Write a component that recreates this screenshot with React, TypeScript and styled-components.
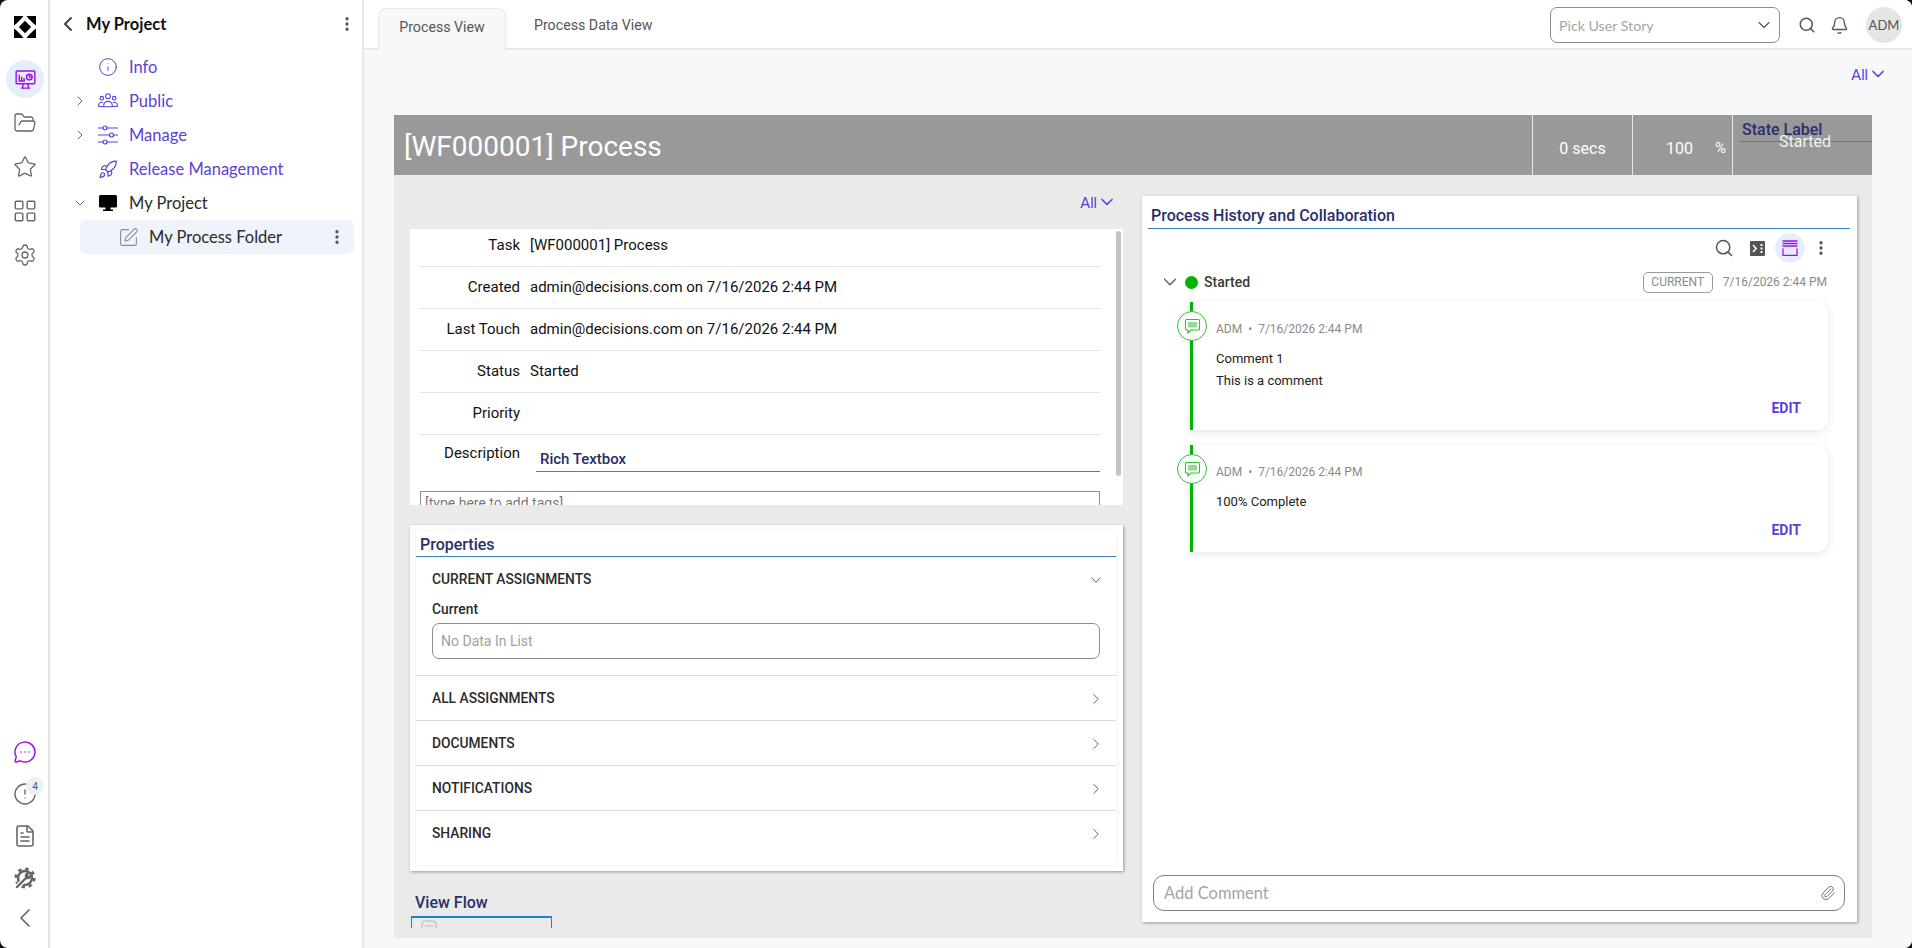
import React from 'react';
import styled, { createGlobalStyle } from 'styled-components';
import {
  ChevronDown,
  ChevronLeft,
  ChevronRight,
  Bell,
  EllipsisVertical,
  FileText,
  FolderOpen,
  Info,
  LayoutGrid,
  MessageCircleMore,
  Paperclip,
  Rocket,
  Search,
  Settings,
  SquarePen,
  Star,
  CircleAlert,
} from 'lucide-react';

const SIDE_FONT = '"Lato", "Noto Sans", sans-serif';
const BODY_FONT = 'Roboto, "Liberation Sans", sans-serif';
const PURPLE = '#5b3fd6';
const NAVY = '#27306b';
const BLUE_LINE = '#3b82c4';

const GlobalStyle = createGlobalStyle`
  html, body { margin: 0; padding: 0; background: #111; height: 100%; overflow: hidden; }
  * { box-sizing: border-box; }
  #root { height: 100%; }
`;

const Page = styled.div`
  display: flex;
  height: 948px;
  width: 1912px;
  background: #fff;
  border-radius: 8px;
  overflow: hidden;
  font-family: ${BODY_FONT};
`;

const Rail = styled.nav`
  width: 50px;
  flex: none;
  border-right: 2px solid #e4e4e4;
  display: flex;
  flex-direction: column;
  align-items: center;
  justify-content: space-between;
  padding: 5px 0 11px 2px;
`;

const RailGroup = styled.div`
  display: flex;
  flex-direction: column;
  align-items: center;
`;

const RailItem = styled.div<{ $active?: boolean; $h?: number; $color?: string; $gap?: number }>`
  position: relative;
  width: 44px;
  height: ${(p) => p.$h ?? 44}px;
  margin-top: ${(p) => p.$gap ?? 0}px;
  display: flex;
  align-items: center;
  justify-content: center;
  color: ${(p) => p.$color ?? '#666'};

  ${(p) =>
    p.$active &&
    `
    &::before {
      content: '';
      position: absolute;
      left: 3px;
      top: 3px;
      width: 38px;
      height: 38px;
      border-radius: 50%;
      background: #e6eefd;
    }
    svg { position: relative; }
  `}
`;

const RailBadge = styled.span`
  position: absolute;
  top: 4px;
  right: 3px;
  width: 18px;
  height: 18px;
  border-radius: 50%;
  background: #f0f0f0;
  color: #2f5f95;
  font-size: 10px;
  display: flex;
  align-items: center;
  justify-content: center;
`;

const Sidebar = styled.aside`
  width: 314px;
  flex: none;
  border-right: 2px solid #e8e8e8;
  font-family: ${SIDE_FONT};
  padding: 7px 8px 0 0;
`;

const SideHeader = styled.div`
  display: flex;
  align-items: center;
  height: 34px;
  padding-left: 6px;
  margin-bottom: 9px;
  color: #444;
`;

const SideTitle = styled.div`
  flex: 1;
  margin-left: 6px;
  font-size: 16.5px;
  font-weight: 700;
  color: #111;
`;

const TreeRow = styled.div<{ $selected?: boolean; $dark?: boolean }>`
  height: 34px;
  display: flex;
  align-items: center;
  font-size: 16.5px;
  color: ${(p) => (p.$dark ? '#2a2a2a' : PURPLE)};
  padding-left: ${(p) => (p.$selected ? 0 : '22px')};
  margin-left: ${(p) => (p.$selected ? '30px' : 0)};
  background: ${(p) => (p.$selected ? '#eef3fc' : 'transparent')};
  border-radius: 6px;
`;

const Caret = styled.span`
  width: 16px;
  display: flex;
  justify-content: center;
  color: #555;
  margin-right: 10px;
`;

const TreeIcon = styled.span`
  width: 20px;
  display: flex;
  justify-content: center;
  margin-right: 11px;
  color: ${PURPLE};
`;

const SelectedIcon = styled.span`
  display: flex;
  margin: 0 10px 0 38px;
  color: #8a8a8a;
`;

const TreeText = styled.span<{ $grow?: boolean }>`
  flex: ${(p) => (p.$grow ? 1 : 'none')};
`;

const KebabButton = styled.span<{ $right: number }>`
  display: flex;
  color: #555;
  margin-right: ${(p) => p.$right}px;
`;

const Main = styled.main`
  flex: 1;
  min-width: 0;
  background: #f7f8fa;
  display: flex;
  flex-direction: column;
`;

const TopBar = styled.header`
  height: 50px;
  flex: none;
  background: #fff;
  border-bottom: 2px solid #e8e8e8;
  display: flex;
  align-items: flex-end;
  padding-left: 14px;
`;

const ActiveTab = styled.div`
  width: 128px;
  height: 42px;
  margin-bottom: -2px;
  background: #f7f8fa;
  border: 1px solid #e8e8e8;
  border-bottom: none;
  border-radius: 8px 8px 0 0;
  display: flex;
  align-items: center;
  justify-content: center;
  font-size: 14.2px;
  color: #555;
  padding-bottom: 5px;
`;

const PlainTab = styled.div`
  height: 46px;
  margin-left: 28px;
  display: flex;
  align-items: center;
  font-size: 14.2px;
  color: #555;
`;

const TopTools = styled.div`
  margin-left: auto;
  height: 48px;
  align-self: flex-start;
  display: flex;
  align-items: center;
  padding: 2px 10px 0 0;
  color: #555;
`;

const StoryPicker = styled.div`
  width: 230px;
  height: 36px;
  border: 1px solid #8c8c8c;
  border-radius: 7px;
  display: flex;
  align-items: center;
  justify-content: space-between;
  padding: 0 5px 0 8px;
  font-family: ${SIDE_FONT};
  font-size: 14.2px;
  color: #a5a5a5;
  margin-right: 18px;

  svg { color: #555; }
`;

const BellWrap = styled.span`
  display: flex;
  margin: 0 17px 0 14px;
`;

const Avatar = styled.div`
  width: 36px;
  height: 36px;
  border-radius: 50%;
  background: #e5e5e5;
  display: flex;
  align-items: center;
  justify-content: center;
  font-family: ${SIDE_FONT};
  font-size: 13px;
  color: #555;
`;

const AllFilter = styled.div<{ $tight?: boolean }>`
  display: flex;
  justify-content: flex-end;
  align-items: center;
  color: ${PURPLE};
  font-family: ${SIDE_FONT};
  font-size: 14.5px;
  height: ${(p) => (p.$tight ? '54px' : '65px')};
  padding-right: ${(p) => (p.$tight ? '6px' : '24px')};
  padding-top: ${(p) => (p.$tight ? 0 : '1px')};
  padding-bottom: ${(p) => (p.$tight ? 0 : '18px')};
`;

const Panel = styled.section`
  margin-left: 30px;
  width: 1478px;
  flex: 1;
  min-height: 0;
  margin-bottom: 10px;
  display: flex;
  flex-direction: column;
`;

const ProcessHeader = styled.div`
  height: 60px;
  flex: none;
  background: #999;
  color: #fff;
  display: flex;
  align-items: stretch;
`;

const ProcessTitle = styled.div`
  flex: 1;
  padding: 2px 0 0 10px;
  display: flex;
  align-items: center;
  font-size: 28px;
`;

const HeaderCell = styled.div<{ $w: number; $between?: boolean }>`
  width: ${(p) => p.$w}px;
  border-left: 1px solid #e6e6e6;
  display: flex;
  align-items: center;
  justify-content: ${(p) => (p.$between ? 'flex-end' : 'center')};
  font-size: 16px;
  padding-top: 6px;
  padding-right: ${(p) => (p.$between ? '6px' : 0)};
`;

const Percent = styled.span`
  margin-left: 22px;
  font-size: 15px;
`;

const StateCell = styled.div`
  width: 140px;
  border-left: 1px solid #e6e6e6;
  position: relative;
`;

const StateLabel = styled.div`
  margin: 4px 0 0 9px;
  height: 22px;
  font-size: 16px;
  font-weight: 500;
  color: ${NAVY};
  line-height: 21px;
`;

const StateRule = styled.div`
  height: 1px;
  margin-left: 6px;
  background: ${BLUE_LINE};
`;

const StateValue = styled.div`
  position: absolute;
  left: 46px;
  top: 17px;
  font-size: 16px;
  color: #f2f2f2;
`;

const PanelBody = styled.div`
  flex: 1;
  min-height: 0;
  background: #eaeaea;
  display: flex;
  gap: 19px;
  padding-left: 16px;
  overflow: hidden;
`;

const LeftColumn = styled.div`
  width: 713px;
  flex: none;
  display: flex;
  flex-direction: column;
`;

const InfoCard = styled.div`
  height: 276px;
  flex: none;
  background: #fff;
  display: flex;
  overflow: hidden;
`;

const InfoContent = styled.div`
  flex: 1;
  padding: 0 0 0 10px;
  min-width: 0;
`;

const InfoRow = styled.div<{ $first?: boolean }>`
  display: flex;
  align-items: center;
  height: ${(p) => (p.$first ? '38px' : '42px')};
  border-bottom: 1px solid #e3e3e3;
  padding-bottom: ${(p) => (p.$first ? '6px' : '2px')};
  font-size: 15px;
  color: #111;
`;

const InfoLabel = styled.div`
  width: 100px;
  flex: none;
  text-align: right;
  margin-right: 10px;
`;

const DescriptionRow = styled.div`
  display: flex;
  height: 56px;
  padding-top: 9px;
  font-size: 15px;
  color: #111;
`;

const SectionTitle = styled.div`
  color: ${NAVY};
  font-weight: 500;
  font-size: 16px;
  border-bottom: 1px solid ${BLUE_LINE};
`;

const RichBox = styled(SectionTitle)`
  flex: 1;
  margin: -1px 0 0 6px;
  height: 29px;
  padding: 7px 0 0 4px;
  font-size: 15px;
`;

const TagInput = styled.div`
  height: 30px;
  border: 1px solid #8f8f8f;
  padding: 3px 4px;
  font-size: 14px;
  color: #777;
`;

const ScrollTrack = styled.div`
  width: 23px;
  flex: none;
  padding: 2px 0 0 16px;
`;

const ScrollThumb = styled.div`
  width: 5px;
  height: 245px;
  background: #c4c4c4;
  border-radius: 3px;
`;

const PropertiesCard = styled.div`
  height: 346px;
  flex: none;
  margin-top: 20px;
  background: #fff;
  box-shadow: 1px 1px 3px rgba(0, 0, 0, 0.35);
  padding: 6px 7px 6px 6px;
`;

const PropertiesInner = styled.div`
  height: 100%;
  box-shadow: 0 0 4px rgba(0, 0, 0, 0.08);
`;

const PropertiesTitle = styled(SectionTitle)`
  height: 26px;
  padding: 4px 0 0 4px;
  line-height: 20px;
`;

const AccordionRow = styled.div`
  height: 45px;
  display: flex;
  align-items: center;
  justify-content: space-between;
  padding: 0 11px 0 16px;
  border-top: 1px solid #dcdcdc;
  font-size: 13.8px;
  font-weight: 500;
  color: #2b2b2b;

  svg { color: #555; margin-top: 2px; }
`;

const OpenRow = styled(AccordionRow)`
  border-top: none;
  height: 43px;
`;

const CurrentBody = styled.div`
  padding: 0 16px;
  height: 75px;
`;

const CurrentLabel = styled.div`
  font-size: 13.8px;
  font-weight: 500;
  color: #2b2b2b;
  height: 23px;
  line-height: 18px;
`;

const ListBox = styled.div`
  height: 36px;
  border: 1px solid #8c8c8c;
  border-radius: 7px;
  display: flex;
  align-items: center;
  padding-left: 8px;
  font-size: 14px;
  color: #a0a0a0;
`;

const FlowTitle = styled.div`
  margin: 20px 0 0 5px;
  height: 25px;
  color: ${NAVY};
  font-size: 16px;
  font-weight: 500;
  line-height: 23px;
`;

const FlowClip = styled.div`
  height: 12px;
  overflow: hidden;
`;

const FlowBox = styled.div`
  width: 141px;
  height: 40px;
  margin-left: 1px;
  border: 1px solid #1b83c9;
  border-top-width: 2px;
  padding: 2px 0 0 9px;
  color: #b5b5b5;
`;

const HistoryCard = styled.div`
  width: 715px;
  height: 726px;
  flex: none;
  margin-top: 21px;
  background: #fff;
  box-shadow: 1px 1px 3px rgba(0, 0, 0, 0.35);
  padding: 0 7px 0 6px;
  display: flex;
  flex-direction: column;
`;

const HistoryTitle = styled(SectionTitle)`
  height: 33px;
  padding: 9px 0 0 3px;
  line-height: 22px;
  flex: none;
`;

const Toolbar = styled.div`
  height: 38px;
  flex: none;
  display: flex;
  align-items: center;
  justify-content: flex-end;
  color: #555;
  padding-right: 14px;
`;

const ToolButton = styled.span<{ $active?: boolean; $gap?: number }>`
  width: 30px;
  height: 30px;
  margin-left: ${(p) => p.$gap ?? 3}px;
  border-radius: 50%;
  display: flex;
  align-items: center;
  justify-content: center;
  background: ${(p) => (p.$active ? '#e6eefd' : 'transparent')};
`;

const StageRow = styled.div`
  height: 30px;
  flex: none;
  display: flex;
  align-items: center;
  padding: 0 23px 0 11px;
  color: #555;
`;

const StageDot = styled.span`
  width: 13px;
  height: 13px;
  margin-left: 4px;
  border-radius: 50%;
  background: #00b400;
`;

const StageName = styled.span`
  flex: 1;
  margin-left: 6px;
  font-size: 14px;
  font-weight: 500;
  color: #3a3a3a;
`;

const CurrentTag = styled.span`
  width: 70px;
  height: 21px;
  border: 1px solid #999;
  border-radius: 5px;
  display: flex;
  align-items: center;
  justify-content: center;
  font-size: 12px;
  color: #8a8a8a;
`;

const StageDate = styled.span`
  margin-left: 10px;
  font-size: 12px;
  color: #8a8a8a;
`;

const Timeline = styled.div`
  flex: 1;
  min-height: 0;
  padding: 5px 22px 0 42px;
  display: flex;
  flex-direction: column;
  gap: 15px;
`;

const CommentCard = styled.article<{ $h: number }>`
  position: relative;
  height: ${(p) => p.$h}px;
  border-left: 3px solid #00b400;
  border-radius: 0 12px 12px 0;
  background: #fff;
  box-shadow: 0 2px 8px rgba(0, 0, 0, 0.1);
  padding: 18px 27px 0 23px;
  display: flex;
  flex-direction: column;
`;

const CommentBadge = styled.span`
  position: absolute;
  left: -16px;
  top: 9px;
  width: 30px;
  height: 30px;
  border-radius: 50%;
  border: 1px solid #2fc12f;
  background: #fff;
  color: #2fc12f;
  display: flex;
  align-items: center;
  justify-content: center;
`;

const CommentMeta = styled.div`
  font-size: 12px;
  color: #8a8a8a;
  height: 18px;
  line-height: 18px;
`;

const CommentLine = styled.div`
  font-size: 13px;
  color: #222;
  line-height: 22px;

  ${CommentMeta} + & { margin-top: 10px; }
`;

const EditLink = styled.div`
  margin-top: auto;
  margin-bottom: 14px;
  text-align: right;
  font-size: 14px;
  font-weight: 700;
  color: ${PURPLE};
`;

const CommentBox = styled.div`
  height: 36px;
  flex: none;
  margin: 0 5px 11px 5px;
  border: 1px solid #808080;
  border-radius: 11px;
  display: flex;
  align-items: center;
  justify-content: space-between;
  padding: 0 8px 0 10px;
  font-family: ${SIDE_FONT};
  font-size: 16.5px;
  color: #a5a5a5;

  svg { color: #666; }
`;

const LogoMark = () => (
  <svg width="22" height="22" viewBox="0 0 22 22" fill="#000">
    <path d="M0 0h9.500L7.500 2.500 2.500 7.500 0 9.500z" />
    <path d="M22 0h-9.500l2 2.500 5 5 2.500 2z" />
    <path d="M0 22h9.500l-2-2.500-5-5L0 12.500z" />
    <path d="M22 22h-9.500l2-2.500 5-5 2.500-2z" />
    <path d="M11 4.800 17.200 11 11 17.200 4.800 11z" />
  </svg>
);

const MonitorChart = () => (
  <svg width="21" height="21" viewBox="0 0 22 22" fill="none" stroke="#9b12e8" strokeWidth="1.500">
    <rect x="1.200" y="2" width="19.600" height="13.500" rx="1" />
    <path d="M4.500 6v6.500h6M7 12V8M9.500 12V9.500" />
    <circle cx="15" cy="8.500" r="3" />
    <path d="M15 5.500v3h3M8.500 15.500 8 19.500M13.500 15.500l.5 4M6 20h10" />
  </svg>
);

const ToolGear = () => (
  <svg width="22" height="22" viewBox="0 0 22 22" fill="none">
    <circle cx="11" cy="11" r="9.300" stroke="#666" strokeWidth="2.600" strokeDasharray="3.400 3.900" />
    <circle cx="11" cy="11" r="7" stroke="#666" strokeWidth="2.600" />
    <path d="M3 20 13.500 9.500" stroke="#fff" strokeWidth="5" />
    <path d="M3 20 12.500 10.500" stroke="#666" strokeWidth="2.400" strokeLinecap="round" />
    <path d="M11 10.500a3.800 3.800 0 0 1 5-5l-2.200 2.300 1.200 1.300 2.300-2.200a3.800 3.800 0 0 1-5 5z" fill="#666" />
  </svg>
);

const PeopleGroup = () => (
  <svg width="20" height="16" viewBox="0 0 20 16" fill="none" stroke="currentColor" strokeWidth="1.100">
    <circle cx="10" cy="3.200" r="2.400" />
    <circle cx="3.800" cy="5.200" r="1.800" />
    <circle cx="16.200" cy="5.200" r="1.800" />
    <path d="M5.800 13.800v-1.800a4.200 3.600 0 0 1 8.400 0v1.800z" />
    <path d="M5.800 13.500H.7v-1.500a3 2.800 0 0 1 4.300-2.500M14.200 13.500h5.100v-1.500a3 2.800 0 0 0-4.300-2.500" />
  </svg>
);

const SliderLines = () => (
  <svg width="20" height="20" viewBox="0 0 20 20" fill="#fff" stroke="currentColor" strokeWidth="1.200">
    <path d="M0 3h20M0 10h20M0 17h20" />
    <circle cx="7" cy="3" r="2" />
    <circle cx="13.500" cy="10" r="2" />
    <circle cx="7" cy="17" r="2" />
  </svg>
);

const SolidMonitor = () => (
  <svg width="18" height="18" viewBox="0 0 18 18" fill="#000">
    <rect x="0" y="1" width="18" height="12.500" rx="1.500" />
    <path d="M6.500 13h5v2.500h2.500V17H4v-1.500h2.500z" />
  </svg>
);

const TerminalBox = () => (
  <svg width="15" height="15" viewBox="0 0 15 15">
    <rect width="15" height="15" rx="1" fill="#555" />
    <path d="M3 4l3.200 3.500L3 11" fill="none" stroke="#fff" strokeWidth="1.500" />
    <path d="M10.500 3h2v2h-2zM10.500 6.500h2v2h-2zM10.500 10h2v2h-2z" fill="#fff" />
  </svg>
);

const StackView = () => (
  <svg width="16" height="16" viewBox="0 0 16 16" fill="none" stroke="#9b12e8" strokeWidth="1.300">
    <path d="M0.500 1h15M0.500 3.500h15M0.500 6h15" />
    <path d="M1 8.500v7h14v-7" />
  </svg>
);

const ChatBubble = () => (
  <svg width="17" height="17" viewBox="0 0 17 17" fill="none" stroke="currentColor" strokeWidth="1.100">
    <path d="M2.500 1.500h12a1 1 0 0 1 1 1v8.500a1 1 0 0 1-1 1H7l-3 3v-3H2.500a1 1 0 0 1-1-1V2.500a1 1 0 0 1 1-1z" />
    <rect x="4" y="4" width="9" height="5.500" fill="currentColor" stroke="none" opacity="0.55" />
  </svg>
);

const FlowDoc = () => (
  <svg width="16" height="20" viewBox="0 0 16 20" fill="none" stroke="currentColor">
    <rect x="1" y="1" width="14" height="18" rx="3" />
    <path d="M4 6h8" />
  </svg>
);

const App = () => (
  <>
    <GlobalStyle />
    <Page>
      <Rail>
        <RailGroup>
          <RailItem>
            <LogoMark />
          </RailItem>
          <RailItem $gap={8} $active>
            <MonitorChart />
          </RailItem>
          <RailItem>
            <FolderOpen size={24} strokeWidth={1.3} />
          </RailItem>
          <RailItem>
            <Star size={24} strokeWidth={1.3} />
          </RailItem>
          <RailItem>
            <LayoutGrid size={26} strokeWidth={1.3} />
          </RailItem>
          <RailItem>
            <Settings size={24} strokeWidth={1.3} />
          </RailItem>
        </RailGroup>
        <RailGroup>
          <RailItem $h={42} $color="#9b12e8">
            <MessageCircleMore size={24} strokeWidth={1.5} />
          </RailItem>
          <RailItem $h={42}>
            <CircleAlert size={24} strokeWidth={1.4} />
            <RailBadge>4</RailBadge>
          </RailItem>
          <RailItem $h={42}>
            <FileText size={24} strokeWidth={1.6} />
          </RailItem>
          <RailItem $h={42}>
            <ToolGear />
          </RailItem>
          <RailItem $h={38}>
            <ChevronLeft size={32} strokeWidth={1.3} />
          </RailItem>
        </RailGroup>
      </Rail>

      <Sidebar>
        <SideHeader>
          <ChevronLeft size={24} strokeWidth={2} />
          <SideTitle>My Project</SideTitle>
          <KebabButton $right={-2}>
            <EllipsisVertical size={18} strokeWidth={2.4} />
          </KebabButton>
        </SideHeader>
        <TreeRow>
          <Caret />
          <TreeIcon>
            <Info size={22} strokeWidth={1.2} />
          </TreeIcon>
          <TreeText>Info</TreeText>
        </TreeRow>
        <TreeRow>
          <Caret>
            <ChevronRight size={20} strokeWidth={1.3} />
          </Caret>
          <TreeIcon>
            <PeopleGroup />
          </TreeIcon>
          <TreeText>Public</TreeText>
        </TreeRow>
        <TreeRow>
          <Caret>
            <ChevronRight size={20} strokeWidth={1.3} />
          </Caret>
          <TreeIcon>
            <SliderLines />
          </TreeIcon>
          <TreeText>Manage</TreeText>
        </TreeRow>
        <TreeRow>
          <Caret />
          <TreeIcon>
            <Rocket size={23} strokeWidth={1.4} />
          </TreeIcon>
          <TreeText>Release Management</TreeText>
        </TreeRow>
        <TreeRow $dark>
          <Caret>
            <ChevronDown size={20} strokeWidth={1.3} />
          </Caret>
          <TreeIcon>
            <SolidMonitor />
          </TreeIcon>
          <TreeText>My Project</TreeText>
        </TreeRow>
        <TreeRow $selected $dark>
          <SelectedIcon>
            <SquarePen size={21} strokeWidth={1.2} />
          </SelectedIcon>
          <TreeText $grow>My Process Folder</TreeText>
          <KebabButton $right={8}>
            <EllipsisVertical size={18} strokeWidth={2.4} />
          </KebabButton>
        </TreeRow>
      </Sidebar>

      <Main>
        <TopBar>
          <ActiveTab>Process View</ActiveTab>
          <PlainTab>Process Data View</PlainTab>
          <TopTools>
            <StoryPicker>
              Pick User Story
              <ChevronDown size={20} strokeWidth={1.4} />
            </StoryPicker>
            <Search size={18} strokeWidth={2} />
            <BellWrap>
              <Bell size={19} strokeWidth={1.7} />
            </BellWrap>
            <Avatar>ADM</Avatar>
          </TopTools>
        </TopBar>

        <AllFilter>
          All
          <ChevronDown size={20} strokeWidth={2} />
        </AllFilter>

        <Panel>
          <ProcessHeader>
            <ProcessTitle>[WF000001] Process</ProcessTitle>
            <HeaderCell $w={100}>0 secs</HeaderCell>
            <HeaderCell $w={100} $between>
              100
              <Percent>%</Percent>
            </HeaderCell>
            <StateCell>
              <StateLabel>State Label</StateLabel>
              <StateRule />
              <StateValue>Started</StateValue>
            </StateCell>
          </ProcessHeader>

          <PanelBody>
            <LeftColumn>
              <AllFilter $tight>
                All
                <ChevronDown size={20} strokeWidth={2} />
              </AllFilter>
              <InfoCard>
                <InfoContent>
                  <InfoRow $first>
                    <InfoLabel>Task</InfoLabel>[WF000001] Process
                  </InfoRow>
                  <InfoRow>
                    <InfoLabel>Created</InfoLabel>admin@decisions.com on 7/16/2026 2:44 PM
                  </InfoRow>
                  <InfoRow>
                    <InfoLabel>Last Touch</InfoLabel>admin@decisions.com on 7/16/2026 2:44 PM
                  </InfoRow>
                  <InfoRow>
                    <InfoLabel>Status</InfoLabel>Started
                  </InfoRow>
                  <InfoRow>
                    <InfoLabel>Priority</InfoLabel>
                  </InfoRow>
                  <DescriptionRow>
                    <InfoLabel>Description</InfoLabel>
                    <RichBox>Rich Textbox</RichBox>
                  </DescriptionRow>
                  <TagInput>[type here to add tags]</TagInput>
                </InfoContent>
                <ScrollTrack>
                  <ScrollThumb />
                </ScrollTrack>
              </InfoCard>

              <PropertiesCard>
                <PropertiesInner>
                  <PropertiesTitle>Properties</PropertiesTitle>
                  <OpenRow>
                    CURRENT ASSIGNMENTS
                    <ChevronDown size={18} strokeWidth={1.2} />
                  </OpenRow>
                  <CurrentBody>
                    <CurrentLabel>Current</CurrentLabel>
                    <ListBox>No Data In List</ListBox>
                  </CurrentBody>
                  {['ALL ASSIGNMENTS', 'DOCUMENTS', 'NOTIFICATIONS', 'SHARING'].map((name) => (
                    <AccordionRow key={name}>
                      {name}
                      <ChevronRight size={18} strokeWidth={1.2} />
                    </AccordionRow>
                  ))}
                </PropertiesInner>
              </PropertiesCard>

              <FlowTitle>View Flow</FlowTitle>
              <FlowClip>
                <FlowBox>
                  <FlowDoc />
                </FlowBox>
              </FlowClip>
            </LeftColumn>

            <HistoryCard>
              <HistoryTitle>Process History and Collaboration</HistoryTitle>
              <Toolbar>
                <ToolButton>
                  <Search size={20} strokeWidth={1.8} />
                </ToolButton>
                <ToolButton>
                  <TerminalBox />
                </ToolButton>
                <ToolButton $active>
                  <StackView />
                </ToolButton>
                <ToolButton $gap={1}>
                  <EllipsisVertical size={18} strokeWidth={2.4} />
                </ToolButton>
              </Toolbar>
              <StageRow>
                <ChevronDown size={22} strokeWidth={1.3} />
                <StageDot />
                <StageName>Started</StageName>
                <CurrentTag>CURRENT</CurrentTag>
                <StageDate>7/16/2026 2:44 PM</StageDate>
              </StageRow>
              <Timeline>
                <CommentCard $h={128}>
                  <CommentBadge>
                    <ChatBubble />
                  </CommentBadge>
                  <CommentMeta>ADM &nbsp;•&nbsp; 7/16/2026 2:44 PM</CommentMeta>
                  <CommentLine>Comment 1</CommentLine>
                  <CommentLine>This is a comment</CommentLine>
                  <EditLink>EDIT</EditLink>
                </CommentCard>
                <CommentCard $h={107}>
                  <CommentBadge>
                    <ChatBubble />
                  </CommentBadge>
                  <CommentMeta>ADM &nbsp;•&nbsp; 7/16/2026 2:44 PM</CommentMeta>
                  <CommentLine>100% Complete</CommentLine>
                  <EditLink>EDIT</EditLink>
                </CommentCard>
              </Timeline>
              <CommentBox>
                Add Comment
                <Paperclip size={16} strokeWidth={1.4} />
              </CommentBox>
            </HistoryCard>
          </PanelBody>
        </Panel>
      </Main>
    </Page>
  </>
);

export default App;
